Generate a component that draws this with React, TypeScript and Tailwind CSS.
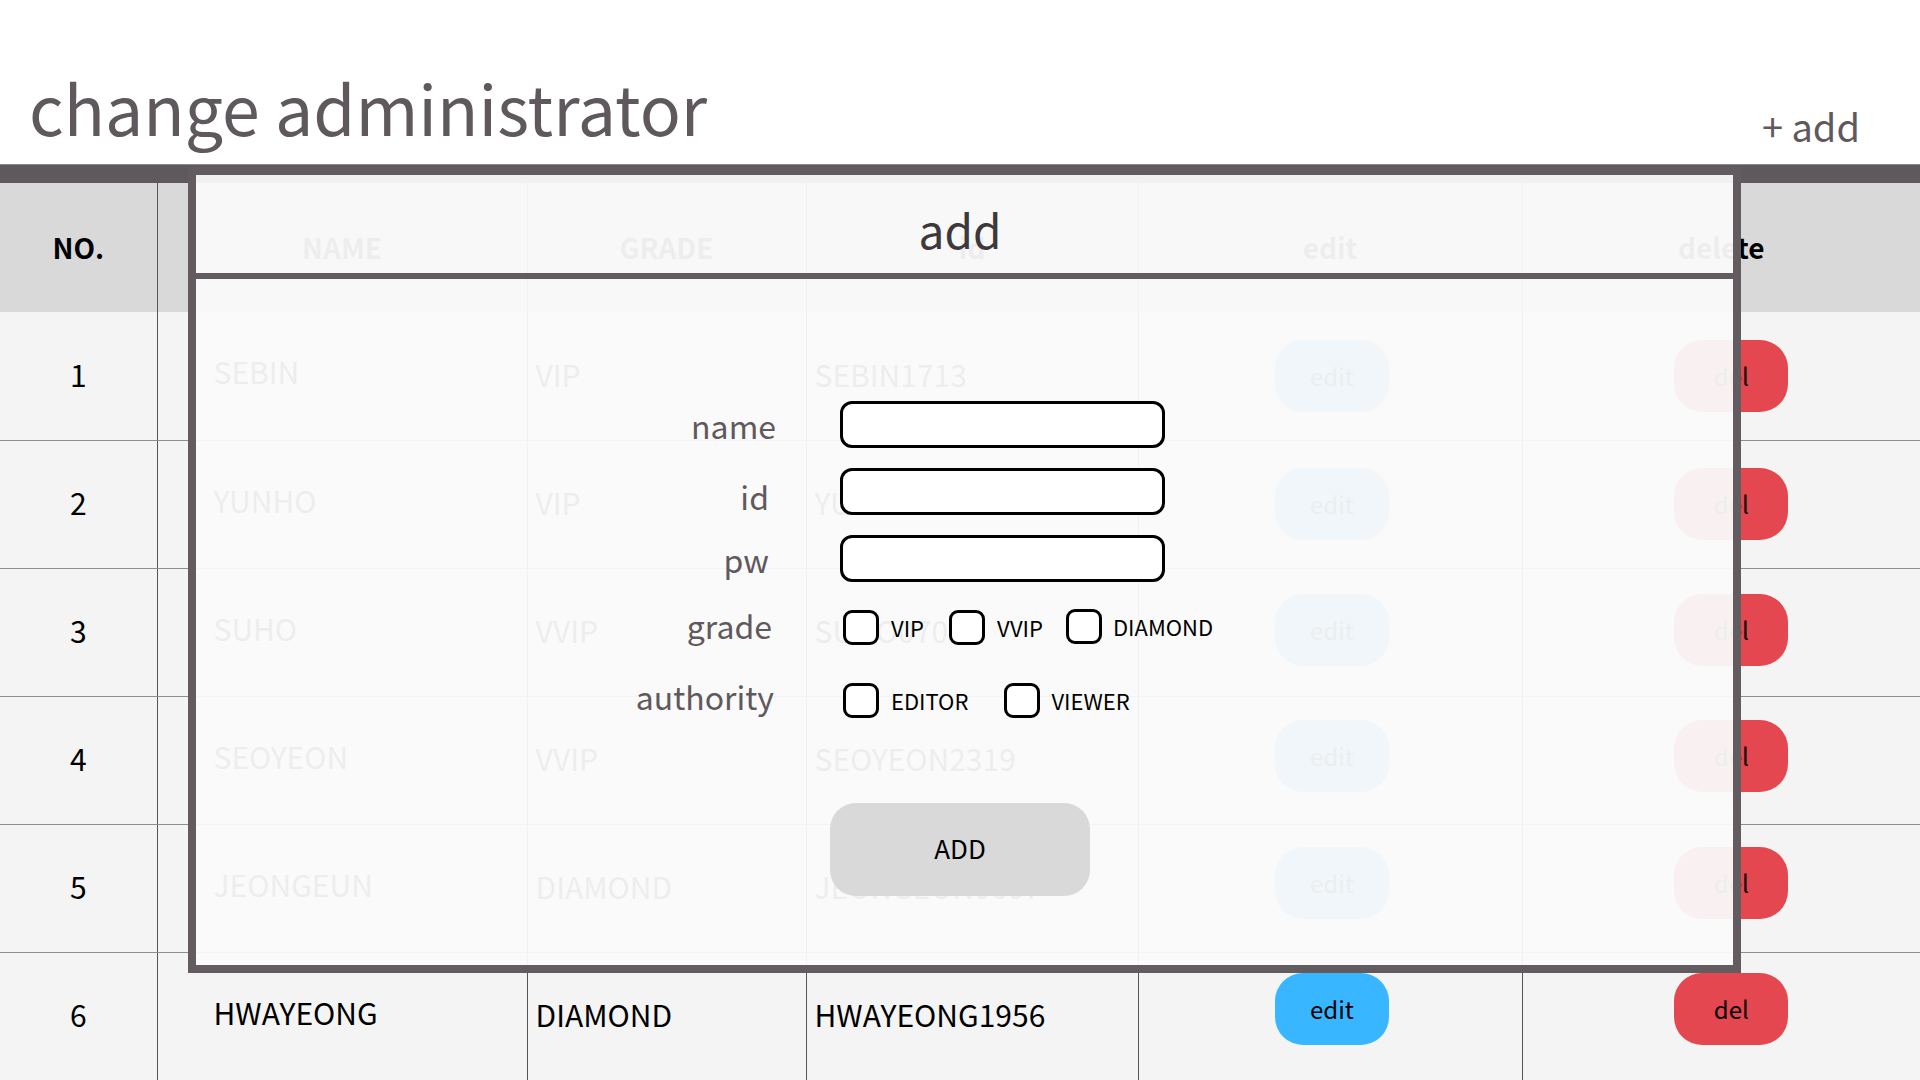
import React from "react";

const rows = [
  { no: 1, name: "SEBIN", grade: "VIP", id: "SEBIN1713", shift: "" },
  { no: 2, name: "YUNHO", grade: "VIP", id: "YUNHO0127", shift: "" },
  { no: 3, name: "SUHO", grade: "VVIP", id: "SUHO0704", shift: "-translate-y-[2px]" },
  { no: 4, name: "SEOYEON", grade: "VVIP", id: "SEOYEON2319", shift: "-translate-y-[4px]" },
  { no: 5, name: "JEONGEUN", grade: "DIAMOND", id: "JEONGEUN0607", shift: "-translate-y-[5px]" },
  { no: 6, name: "HWAYEONG", grade: "DIAMOND", id: "HWAYEONG1956", shift: "-translate-y-[7px]" },
];

function Box() {
  return <span className="block w-[36px] h-[35px] border-[3px] border-black rounded-[9px] bg-white shrink-0" />;
}

export default function App() {
  return (
    <div className="relative w-[1920px] h-[1080px] overflow-hidden bg-white font-['Noto_Sans_CJK_KR','Noto_Sans',sans-serif]">
      <header className="h-[164px] flex items-end justify-between">
        <h1 className="ml-[29px] mb-[23px] text-[68px] leading-none text-[#5f595d]">change administrator</h1>
        <button className="mr-[60px] mb-[19px] text-[38px] leading-none text-[#5f595d]">+ add</button>
      </header>
      <div className="h-[19px] bg-[#5f595d] border-t border-[#8b8b8b]" />
      <table className="w-[1920px] table-fixed border-collapse">
        <colgroup>
          <col className="w-[157px]" />
          <col className="w-[370px]" />
          <col className="w-[279px]" />
          <col className="w-[332px]" />
          <col className="w-[384px]" />
          <col className="w-[398px]" />
        </colgroup>
        <thead>
          <tr className="h-[129px] bg-[#d9d9d9] text-[28px] font-bold text-black">
            <th className="border-r border-[#555] pb-[2px]">NO.</th>
            <th className="border-r border-[#555] pb-[2px]">NAME</th>
            <th className="border-r border-[#555] pb-[2px]">GRADE</th>
            <th className="border-r border-[#555] pb-[2px]">id</th>
            <th className="border-r border-[#555] pb-[2px]">edit</th>
            <th className="pb-[2px]">delete</th>
          </tr>
        </thead>
        <tbody>
          {rows.map((r) => (
            <tr key={r.no} className="h-[128px] bg-[#f4f4f4] text-[30px] text-black">
              <td className="border-r border-b border-r-[#555] border-b-[#8e8e8e] text-center pb-[3px]">{r.no}</td>
              <td className="border-r border-b border-r-[#555] border-b-[#8e8e8e] pl-[56px] pb-[8px]">{r.name}</td>
              <td className="border-r border-b border-r-[#555] border-b-[#8e8e8e] pl-[8px] pb-[3px]">{r.grade}</td>
              <td className="border-r border-b border-r-[#555] border-b-[#8e8e8e] pl-[8px] pb-[3px]">{r.id}</td>
              <td className="border-r border-b border-r-[#555] border-b-[#8e8e8e]">
                <div className={`flex justify-center pl-[4px] ${r.shift}`}>
                  <button className="w-[114px] h-[72px] rounded-[28px] bg-[#38b6ff] text-[24px] text-black">edit</button>
                </div>
              </td>
              <td className="border-b border-b-[#8e8e8e]">
                <div className={`flex justify-center pl-[20px] ${r.shift}`}>
                  <button className="w-[114px] h-[72px] rounded-[28px] bg-[#e54750] text-[24px] text-black">del</button>
                </div>
              </td>
            </tr>
          ))}
        </tbody>
      </table>

      <div className="absolute left-[188px] top-[167px] w-[1553px] h-[806px] border-[8px] border-[#625c60] bg-[#fafafa]/95 flex flex-col">
        <div className="h-[104px] pt-[10px] border-b-[6px] border-[#625c60] flex items-center justify-center pr-[9px]">
          <span className="text-[46px] leading-none text-[#3d383b]">add</span>
        </div>
        <div className="flex flex-col pt-[122px]">
          <div className="grid grid-cols-[580px_auto] gap-x-[64px] items-center text-[#5f595d]">
            <label className="text-right text-[32px] leading-none">name</label>
            <span className="block w-[325px] h-[47px] border-[3px] border-black rounded-[12px] bg-white" />
            <label className="mt-[20px] text-right text-[32px] leading-none pr-[7px] pt-[8px]">id</label>
            <span className="mt-[20px] block w-[325px] h-[47px] border-[3px] border-black rounded-[12px] bg-white" />
            <label className="mt-[20px] text-right text-[32px] leading-none pr-[7px]">pw</label>
            <span className="mt-[20px] block w-[325px] h-[47px] border-[3px] border-black rounded-[12px] bg-white" />
            <label className="mt-[22px] text-right text-[32px] leading-none pr-[4px] pb-[6px]">grade</label>
            <div className="mt-[22px] h-[47px] flex items-center pl-[3px] text-[22px] text-black">
              <Box />
              <span className="ml-[12px]">VIP</span>
              <span className="ml-[25px]"><Box /></span>
              <span className="ml-[12px]">VVIP</span>
              <span className="ml-[23px] -mt-[3px]"><Box /></span>
              <span className="ml-[11px] -mt-[3px]">DIAMOND</span>
            </div>
            <label className="mt-[26px] text-right text-[32px] leading-none pr-[2px] pb-[10px]">authority</label>
            <div className="mt-[26px] h-[47px] flex items-center pl-[3px] text-[22px] text-black">
              <Box />
              <span className="ml-[12px]">EDITOR</span>
              <span className="ml-[36px]"><Box /></span>
              <span className="ml-[11px]">VIEWER</span>
            </div>
          </div>
          <div className="flex justify-center pr-[9px] mt-[79px]">
            <button className="w-[260px] h-[93px] pb-[4px] rounded-[26px] bg-[#d9d9d9] text-[26px] text-black">ADD</button>
          </div>
        </div>
      </div>
    </div>
  );
}
